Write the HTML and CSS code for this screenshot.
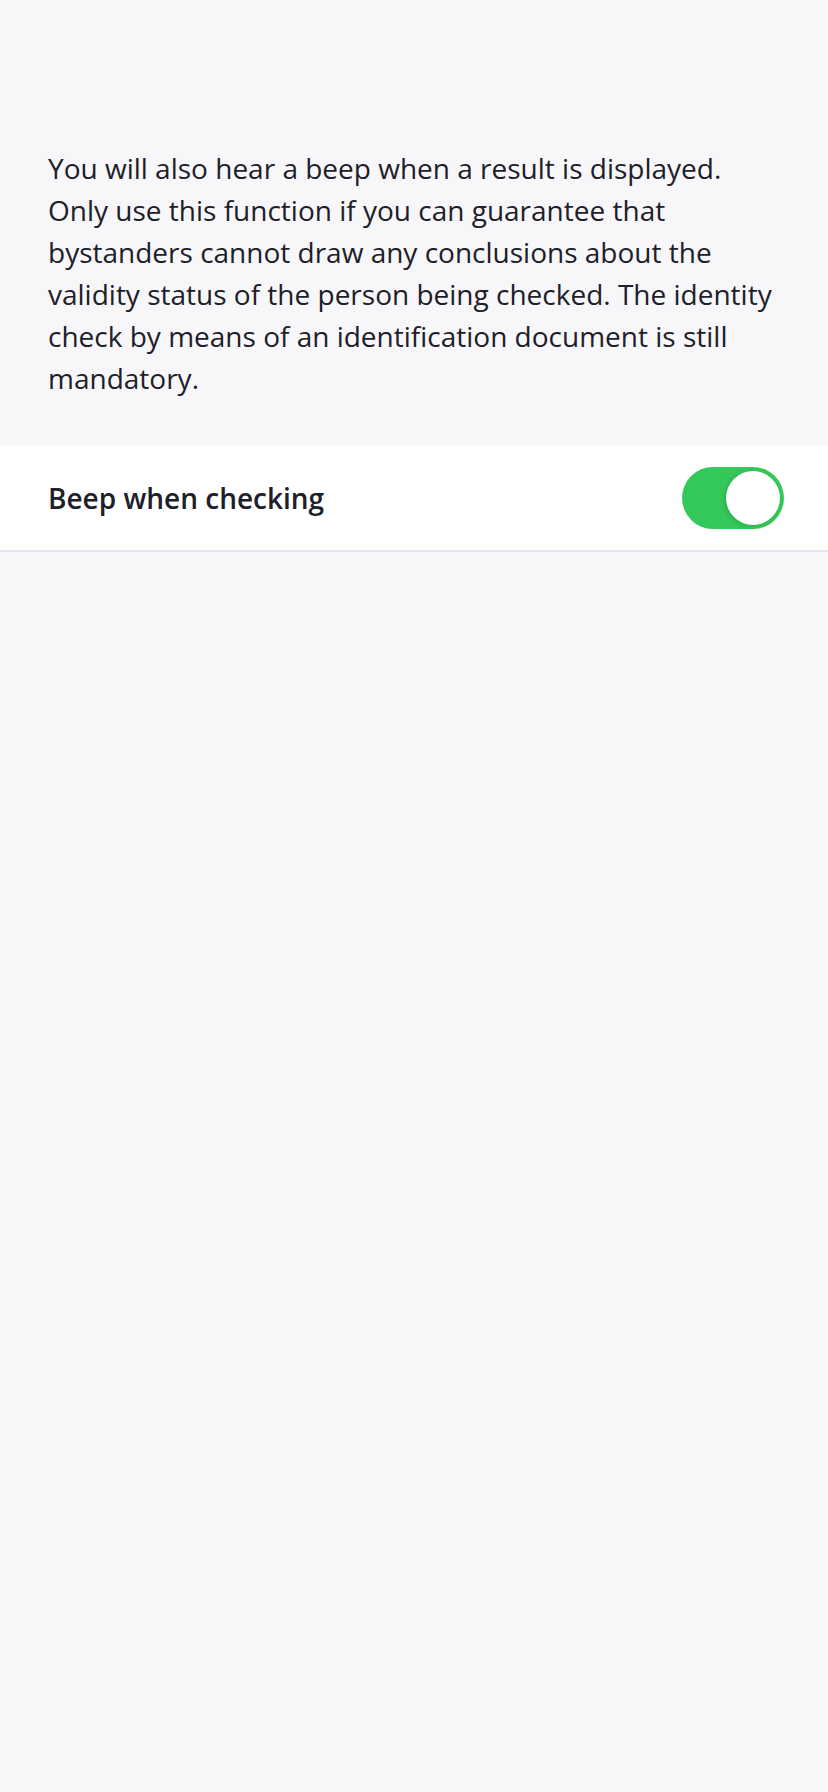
FILE: index.html
```html
<!DOCTYPE html>
<html>
<head>
<meta charset="utf-8">
<link rel="stylesheet" href="styles.css">
</head>
<body>
<main class="page">
  <p class="info">You will also hear a beep when a result is displayed. Only use this function if you can guarantee that bystanders cannot draw any conclusions about the validity status of the person being checked. The identity check by means of an identification document is still mandatory.</p>
  <div class="row">
    <span class="label">Beep when checking</span>
    <span class="toggle"><span class="knob"></span></span>
  </div>
</main>
</body>
</html>
```
FILE: styles.css
```css
html, body {
  margin: 0;
  padding: 0;
  background: #f7f7f9;
}
body {
  width: 828px;
  min-height: 1792px;
  font-family: "Open Sans", "Noto Sans", sans-serif;
  color: #1d2028;
}
.page {
  padding-top: 147px;
}
.info {
  margin: 0;
  padding: 0 48px;
  font-size: 28px;
  line-height: 42px;
}
.row {
  margin-top: 46px;
  background: #ffffff;
  height: 105px;
  border-bottom: 2px solid #e3e6ec;
  display: flex;
  align-items: center;
  justify-content: space-between;
  padding: 0 44px 0 48px;
}
.label {
  font-size: 28px;
  font-weight: 600;
}
.toggle {
  width: 102px;
  height: 62px;
  border-radius: 31px;
  background: #34c759;
  display: flex;
  align-items: center;
  justify-content: flex-end;
  padding-right: 4px;
  box-sizing: border-box;
}
.knob {
  width: 54px;
  height: 54px;
  border-radius: 50%;
  background: #ffffff;
  box-shadow: -2px 1px 4px rgba(0,0,0,0.12);
}
```
